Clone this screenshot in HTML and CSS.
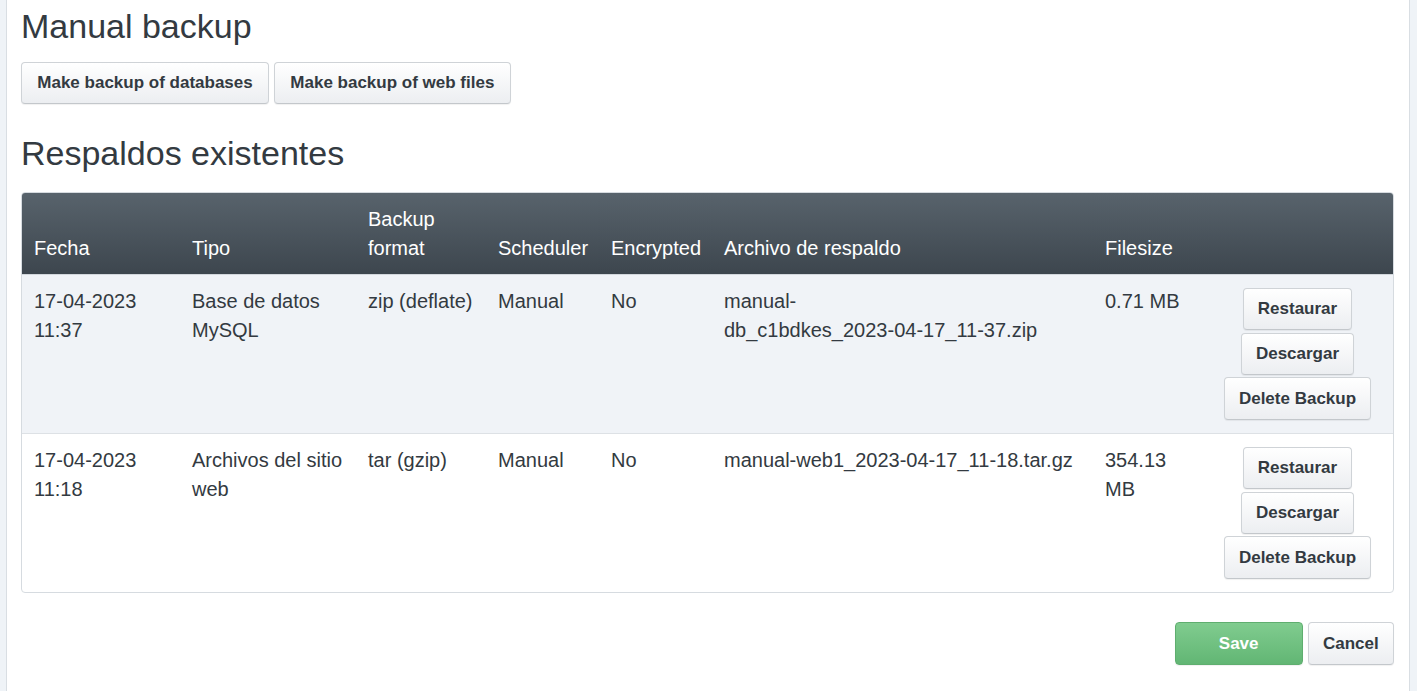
FILE: index.html
```html
<!DOCTYPE html>
<html lang="es">
<head>
<meta charset="utf-8">
<title>Backup</title>
<link rel="stylesheet" href="styles.css">
</head>
<body>
<div class="panel">
  <h1 class="title title-first">Manual backup</h1>
  <div class="top-actions">
    <button class="btn btn-top">Make backup of databases</button>
    <button class="btn btn-top">Make backup of web files</button>
  </div>
  <h1 class="title title-second">Respaldos existentes</h1>
  <div class="table-wrap">
    <table class="backups">
      <colgroup>
        <col class="c-fecha"><col class="c-tipo"><col class="c-format"><col class="c-sched"><col class="c-enc"><col class="c-file"><col class="c-size"><col class="c-act">
      </colgroup>
      <thead>
        <tr>
          <th>Fecha</th><th>Tipo</th><th>Backup format</th><th>Scheduler</th><th>Encrypted</th><th>Archivo de respaldo</th><th>Filesize</th><th></th>
        </tr>
      </thead>
      <tbody>
        <tr class="striped">
          <td>17-04-2023 11:37</td>
          <td>Base de datos MySQL</td>
          <td>zip (deflate)</td>
          <td>Manual</td>
          <td>No</td>
          <td>manual-<span class="nowrap">db_c1bdkes_2023-04-17_11-37.zip</span></td>
          <td>0.71 MB</td>
          <td class="actions">
            <button class="btn btn-row">Restaurar</button>
            <button class="btn btn-row">Descargar</button>
            <button class="btn btn-row">Delete Backup</button>
          </td>
        </tr>
        <tr>
          <td>17-04-2023 11:18</td>
          <td>Archivos del sitio web</td>
          <td>tar (gzip)</td>
          <td>Manual</td>
          <td>No</td>
          <td><span class="nowrap">manual-web1_2023-04-17_11-18.tar.gz</span></td>
          <td>354.13 MB</td>
          <td class="actions">
            <button class="btn btn-row">Restaurar</button>
            <button class="btn btn-row">Descargar</button>
            <button class="btn btn-row">Delete Backup</button>
          </td>
        </tr>
      </tbody>
    </table>
  </div>
  <div class="footer-actions">
    <button class="btn btn-save">Save</button>
    <button class="btn btn-cancel">Cancel</button>
  </div>
</div>
</body>
</html>
```

FILE: styles.css
```css
html, body {
  margin: 0;
  padding: 0;
}
body {
  background: #eff3f7;
  font-family: "Liberation Sans", Arial, sans-serif;
  color: #333a41;
  font-size: 20px;
  line-height: 29px;
}
.panel {
  margin: 0 7px 0 6px;
  background: #fff;
  border-left: 1px solid #d9dee3;
  border-right: 1px solid #d9dee3;
  padding: 8px 15px 26px 14px;
  min-height: 691px;
  box-sizing: border-box;
}
.title {
  margin: 0;
  font-size: 34px;
  line-height: 37px;
  font-weight: 400;
  color: #333a41;
}
.title-first {
  margin-bottom: 17px;
}
.title-second {
  margin-top: 31px;
  margin-bottom: 20px;
}
.top-actions {
  display: flex;
  gap: 5px;
}
.btn {
  font-family: "Liberation Sans", Arial, sans-serif;
  font-weight: 700;
  font-size: 17px;
  line-height: 24px;
  color: #333a41;
  padding: 8px 14.3px;
  border: 1px solid #cfd3d7;
  border-bottom-color: #c3c7cb;
  border-radius: 4px;
  background: linear-gradient(to bottom, #ffffff 0%, #eceef1 100%);
  box-shadow: 0 1px 1px rgba(0,0,0,0.06);
  cursor: pointer;
  box-sizing: border-box;
}
.btn-top {
  padding: 8px 15.3px;
}
.nowrap {
  white-space: nowrap;
}
.table-wrap {
  border: 1px solid #d6dbe0;
  border-radius: 4px;
  overflow: hidden;
}
.backups {
  width: 100%;
  border-collapse: collapse;
  table-layout: fixed;
}
.c-fecha { width: 158px; }
.c-tipo { width: 176px; }
.c-format { width: 130px; }
.c-sched { width: 113px; }
.c-enc { width: 113px; }
.c-file { width: 381px; }
.c-size { width: 117px; }
.c-act { width: 183px; }
.backups th {
  text-align: left;
  font-weight: 400;
  color: #fff;
  vertical-align: bottom;
  padding: 12px 12px 11px 12px;
  background: linear-gradient(to bottom, #58636c 0%, #3d464e 100%);
  border-bottom: 1px solid #d2d7dc;
}
.backups td {
  vertical-align: top;
  padding: 12px 12px;
  border-top: 1px solid #dde1e5;
}
.backups thead + tbody tr:first-child td {
  border-top: none;
}
.backups tr.striped td {
  background: #f0f3f7;
}
.backups td.actions {
  padding: 13px 18px 13px 10px;
  text-align: center;
}
.actions {
  line-height: 0;
}
.btn-row {
  display: block;
  height: 42px;
  margin: 0 auto 3px auto;
}
.btn-row:nth-child(2) {
  margin-bottom: 2px;
}
.btn-row:last-child {
  height: 43px;
  margin-bottom: 0;
}
.footer-actions {
  display: flex;
  justify-content: flex-end;
  gap: 5px;
  margin-top: 29px;
}
.btn-save {
  width: 128px;
  height: 43px;
  color: #fff;
  border-color: #5fae6f;
  background: linear-gradient(to bottom, #80cc8f 0%, #62b674 100%);
}
.btn-cancel {
  height: 43px;
}
```
